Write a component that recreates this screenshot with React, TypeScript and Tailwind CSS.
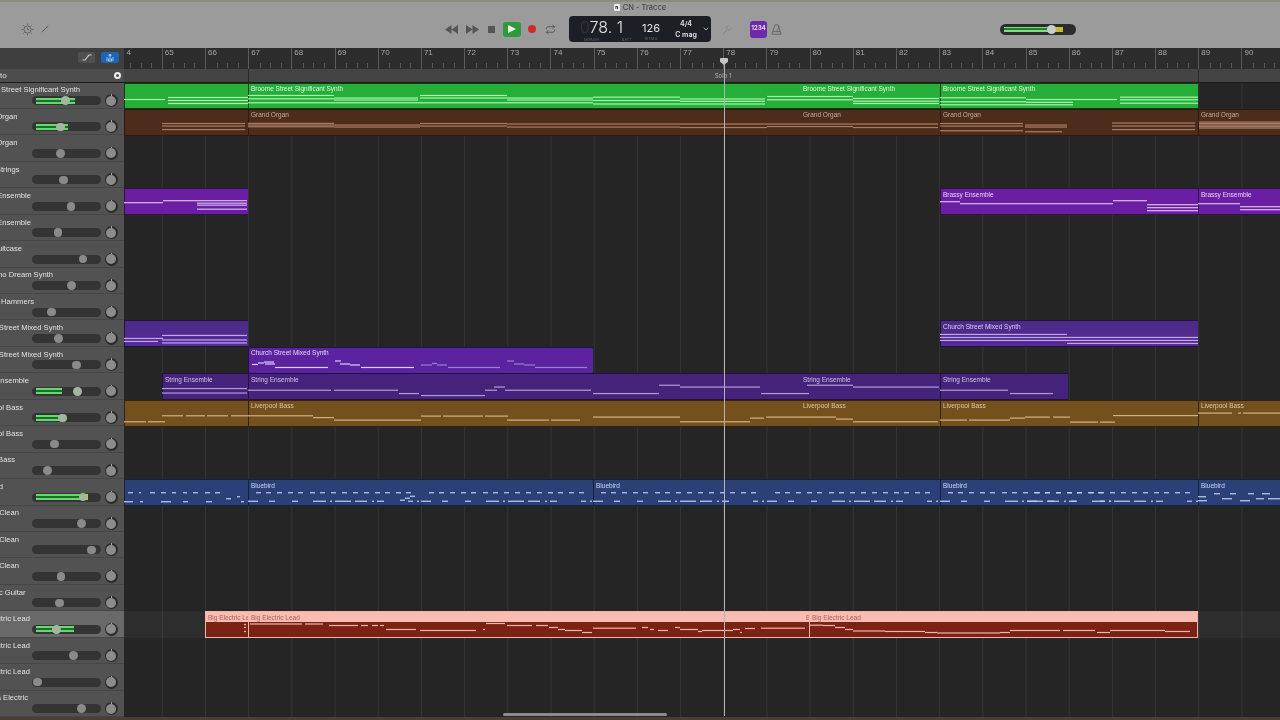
import React from 'react'
import { ChevronDown, Repeat } from 'lucide-react'

const ROW_H = 26.45
const TOP = 82.5
const rowTop = (i: number) => TOP + i * ROW_H

type Track = { name: string; end: number; knob: number; meter?: number; hot?: boolean; selected?: boolean }

const tracks: Track[] = [
  { name: 'Broome Street Significant Synth', end: 80, knob: 65, meter: 75 },
  { name: 'Grand Organ', end: 17.5, knob: 60, meter: 68 },
  { name: 'Grand Organ', end: 17.5, knob: 60 },
  { name: 'Studio Strings', end: 19.5, knob: 63 },
  { name: 'Brassy Ensemble', end: 31, knob: 70.5 },
  { name: 'Brassy Ensemble', end: 31, knob: 57.5 },
  { name: 'Vintage Suitcase', end: 22, knob: 82.5 },
  { name: 'Piano Dream Synth', end: 53, knob: 71 },
  { name: 'Keys Hammers', end: 34, knob: 51 },
  { name: 'Church Street Mixed Synth', end: 63, knob: 58 },
  { name: 'Church Street Mixed Synth', end: 63, knob: 76 },
  { name: 'String Ensemble', end: 29, knob: 77, meter: 62 },
  { name: 'Liverpool Bass', end: 23, knob: 62, meter: 62 },
  { name: 'Liverpool Bass', end: 23, knob: 54 },
  { name: 'Liverpool Bass', end: 15, knob: 47 },
  { name: 'Bluebird', end: 3, knob: 82.5, meter: 82, hot: true },
  { name: 'Electric Clean', end: 19, knob: 81 },
  { name: 'Electric Clean', end: 19, knob: 91 },
  { name: 'Electric Clean', end: 19, knob: 60.5 },
  { name: 'Acoustic Guitar', end: 25.5, knob: 59 },
  { name: 'Big Electric Lead', end: 30, knob: 56, meter: 74, selected: true },
  { name: 'Big Electric Lead', end: 30, knob: 73 },
  { name: 'Big Electric Lead', end: 30, knob: 37 },
  { name: 'Plasma Electric', end: 28, knob: 81 },
]

type Note = [number, number, number]
type Region = { from: number; to: number; label?: string; seamless?: boolean }
type Lane = {
  regions: Region[]
  box: string
  text: string
  note: string
  notes: Note[]
  dim?: Note[]
  dimColor?: string
  head?: boolean
}

const bluebirdTop = (o: number): Note[] =>
  [8, 18, 29, 40, 50, 62, 72, 83, 94, 105, 116, 127, 137, 148, 158].map((x) => [o + x, o + x + 5, 493] as Note)
const bluebirdLow = (o: number): Note[] =>
  ([[0, 10], [21, 27], [44, 50], [65, 78], [82, 84], [87, 103], [107, 119], [124, 126], [129, 136], [160, 165], [169, 171]] as number[][]).map(
    ([a, b]) => [o + a, o + b, 501.5] as Note,
  )

const lanes: Record<number, Lane> = {
  0: {
    box: 'bg-[#25ae38] border-[#123c18]',
    text: 'text-[#e2f8e2]',
    note: '#a8f5ae',
    regions: [
      { from: 124, to: 248 },
      { from: 248, to: 801, label: 'Broome Street Significant Synth' },
      { from: 801, to: 940, label: 'Broome Street Significant Synth', seamless: true },
      { from: 940, to: 1198, label: 'Broome Street Significant Synth' },
    ],
    notes: [
      [124, 165, 99], [168, 248, 97], [168, 248, 100], [168, 248, 103],
      [248, 334, 95], [248, 334, 98.3], [334, 418, 97.5], [334, 418, 99.5], [248, 593, 102.3],
      [420, 507, 95], [420, 507, 97.5], [507, 593, 97.5], [507, 593, 99.5],
      [593, 680, 96.7], [593, 680, 100], [593, 765, 103.5], [680, 765, 98.5], [680, 765, 100.8],
      [767, 853, 96], [767, 853, 99.3], [853, 939, 98], [853, 939, 100.7], [853, 939, 103],
      [940, 1026, 97.3], [940, 1026, 101.3], [940, 1073, 104.3], [1026, 1117, 99], [1026, 1073, 101.8],
      [1120, 1198, 96.7], [1120, 1198, 99.3], [1120, 1198, 102.7],
    ],
  },
  1: {
    box: 'bg-[#4d2c1b] border-[#2c1a10]',
    text: 'text-[#c7ab9b]',
    note: '#a87d66',
    regions: [
      { from: 124, to: 248 },
      { from: 248, to: 801, label: 'Grand Organ' },
      { from: 801, to: 940, label: 'Grand Organ', seamless: true },
      { from: 940, to: 1198, label: 'Grand Organ' },
      { from: 1198, to: 1280, label: 'Grand Organ' },
    ],
    notes: [
      [162, 245, 123.5], [162, 245, 126], [162, 245, 129.5],
      [248, 334, 123.3], [248, 334, 125], [248, 334, 126.7], [334, 420, 125], [334, 420, 127],
      [420, 507, 123.5], [420, 507, 126], [507, 593, 124], [507, 593, 127],
      [593, 680, 124], [593, 680, 127], [680, 767, 124], [680, 767, 127.5],
      [767, 853, 124], [767, 853, 126.5], [853, 938, 124], [853, 938, 127.5],
      [940, 1023, 123.5], [940, 1023, 126], [940, 1023, 130.7],
      [1025, 1067, 125], [1025, 1067, 127], [1025, 1062, 131.7],
      [1112, 1195, 123], [1112, 1195, 126], [1112, 1195, 129.5],
      [1199, 1280, 122], [1199, 1280, 123.5], [1199, 1280, 125], [1199, 1280, 126.5], [1199, 1280, 128],
    ],
  },
  4: {
    box: 'bg-[#6a1fa3] border-[#2e1347]',
    text: 'text-[#e6d2f5]',
    note: '#dcb8f2',
    regions: [
      { from: 124, to: 248 },
      { from: 940, to: 1198, label: 'Brassy Ensemble' },
      { from: 1198, to: 1280, label: 'Brassy Ensemble' },
    ],
    notes: [
      [124, 163, 203], [163, 247, 201], [197, 247, 203.5], [197, 247, 205.5], [197, 247, 209.5],
      [940, 960, 202], [960, 1113, 204], [1113, 1147, 201], [1147, 1198, 205], [1147, 1198, 208], [1147, 1198, 211],
      [1198, 1240, 204], [1240, 1280, 207], [1240, 1280, 210],
    ],
  },
  9: {
    box: 'bg-[linear-gradient(#4c2a86,#552a98)] border-[#241340]',
    text: 'text-[#dccdf2]',
    note: '#c2a8e8',
    regions: [
      { from: 124, to: 248 },
      { from: 940, to: 1198, label: 'Church Street Mixed Synth' },
    ],
    notes: [
      [124, 158, 342], [124, 163, 339], [162, 247, 336], [162, 247, 340.5], [162, 247, 343.5],
      [940, 1067, 335], [940, 1067, 338], [940, 1067, 341], [1067, 1198, 338], [1067, 1198, 341], [1067, 1198, 344],
    ],
  },
  10: {
    box: 'bg-[#5b23a0] border-[#26114a] rounded-[2px]',
    text: 'text-[#e2d3f7]',
    note: '#e0ccf5',
    dimColor: '#9a7fcc',
    regions: [{ from: 248, to: 593, label: 'Church Street Mixed Synth' }],
    notes: [
      [252, 258, 364.5], [258, 264, 363], [264, 274, 362], [265, 275, 364], [275, 328, 367.5],
      [335, 341, 361], [340, 350, 364], [350, 360, 365], [361, 414, 367.5],
    ],
    dim: [
      [421, 432, 365], [432, 437, 363.5], [437, 447, 365], [448, 500, 367.5],
      [507, 514, 361], [514, 524, 364], [524, 535, 365], [535, 587, 367.5],
    ],
  },
  11: {
    box: 'bg-[#46237a] border-[#22113e]',
    text: 'text-[#cfc0e6]',
    note: '#b39cd4',
    regions: [
      { from: 162, to: 248, label: 'String Ensemble' },
      { from: 248, to: 801, label: 'String Ensemble' },
      { from: 801, to: 940, label: 'String Ensemble', seamless: true },
      { from: 940, to: 1068, label: 'String Ensemble' },
    ],
    notes: [
      [162, 247, 389], [162, 247, 393.5], [248, 331, 390.7], [334, 398, 390.7], [399, 419, 394], [421, 485, 396],
      [485, 497, 390.7], [494, 505, 387.5], [505, 591, 390.7], [593, 659, 394], [659, 680, 385.7], [680, 760, 387.5],
      [761, 809, 394], [807, 853, 385.7], [853, 939, 387.5], [940, 1008, 390.7], [1010, 1053, 394],
    ],
  },
  12: {
    box: 'bg-[#74501d] border-[#33230d]',
    text: 'text-[#dcc8a6]',
    note: '#d2b283',
    regions: [
      { from: 124, to: 248 },
      { from: 248, to: 801, label: 'Liverpool Bass' },
      { from: 801, to: 940, label: 'Liverpool Bass', seamless: true },
      { from: 940, to: 1198, label: 'Liverpool Bass' },
      { from: 1198, to: 1280, label: 'Liverpool Bass' },
    ],
    notes: [
      [124, 146, 421.7], [148, 165, 421.7], [162, 183, 415.7], [186, 205, 415.7], [207, 228, 415.7], [231, 313, 415.7],
      [313, 334, 417.5], [334, 421, 420], [421, 441, 416], [443, 483, 416], [485, 508, 416], [507, 549, 420], [551, 580, 420],
      [593, 680, 417], [680, 750, 421.7], [750, 764, 418], [766, 836, 417], [836, 853, 419], [853, 938, 421.7],
      [940, 967, 420], [969, 983, 420], [983, 1010, 420], [1010, 1025, 418], [1025, 1050, 417], [1053, 1070, 417],
      [1070, 1098, 422], [1100, 1115, 422], [1113, 1198, 415.5], [1198, 1232, 413], [1238, 1241, 413], [1243, 1280, 413],
    ],
  },
  15: {
    box: 'bg-[#2c4078] border-[#16213f]',
    text: 'text-[#cdd7f0]',
    note: '#c3cff0',
    regions: [
      { from: 124, to: 248 },
      { from: 248, to: 593, label: 'Bluebird' },
      { from: 593, to: 940, label: 'Bluebird' },
      { from: 940, to: 1198, label: 'Bluebird' },
      { from: 1198, to: 1280, label: 'Bluebird' },
    ],
    notes: [
      [128, 133, 493], [139, 141, 493], [150, 155, 493], [161, 166, 493], [172, 176, 493], [183, 187, 493], [193, 198, 493],
      [205, 210, 493], [215, 220, 493], [124, 133, 502], [140, 143, 502], [161, 171, 502], [183, 188, 502], [206, 212, 502],
      [226, 231, 499], [237, 240, 497], [241, 244, 502],
      ...bluebirdTop(248), ...bluebirdLow(248),
      [400, 405, 500.5], [405, 410, 498.5], [410, 415, 496.5],
      ...bluebirdTop(421), ...bluebirdLow(421),
      ...bluebirdTop(593), ...bluebirdLow(593),
      ...bluebirdTop(767), ...bluebirdLow(767),
      ...bluebirdTop(940), ...bluebirdLow(940),
      ...bluebirdTop(1027), ...bluebirdLow(1027),
      [1198, 1206, 497], [1214, 1220, 494], [1230, 1236, 494], [1248, 1254, 494], [1262, 1270, 494],
      [1198, 1207, 501], [1222, 1232, 499], [1240, 1250, 501], [1256, 1264, 499], [1268, 1280, 499],
    ],
  },
  20: {
    box: 'bg-[#7a2315] border-[#f5b5a8]',
    text: 'text-[#a8625a]',
    note: '#f3b3a5',
    head: true,
    regions: [
      { from: 205, to: 248, label: 'Big Electric Lead' },
      { from: 248, to: 804, label: 'Big Electric Lead' },
      { from: 804, to: 809, label: 'Big Electric Lead', seamless: true },
      { from: 809, to: 1198, label: 'Big Electric Lead' },
    ],
    notes: [
      [244, 246, 625], [244, 246, 628], [244, 246, 632],
      [250, 302, 624.5], [305, 323, 624.5], [329, 358, 626], [361, 368, 626], [372, 378, 626], [380, 384, 626],
      [386, 416, 630], [420, 476, 631], [483, 485, 630], [486, 505, 624], [507, 532, 626], [536, 548, 626],
      [549, 558, 628], [558, 565, 630], [565, 582, 631], [582, 592, 633], [593, 636, 628.7], [642, 648, 628],
      [650, 654, 630], [658, 668, 631], [675, 680, 628], [680, 698, 630], [698, 702, 632], [702, 733, 631],
      [733, 740, 630], [740, 742, 633], [745, 755, 629], [761, 805, 628.7], [810, 823, 625.7], [823, 835, 626],
      [835, 845, 628], [845, 853, 630], [853, 885, 631.5], [885, 925, 632], [925, 937, 633], [937, 1000, 633.5],
      [1000, 1010, 633], [1010, 1060, 631], [1063, 1095, 631], [1097, 1110, 633], [1110, 1165, 631], [1165, 1190, 632],
    ],
  },
}

const bars = Array.from({ length: 28 }, (_, i) => 64 + i)

function TrackHeader({ track }: { track: Track }) {
  return (
    <div className={`h-[26.45px] shrink-0 border-b border-[#464646] ${track.selected ? 'bg-[#696969]' : 'bg-[#525252]'}`}>
      <div
        className="flex h-[13px] items-center justify-end overflow-hidden whitespace-nowrap pt-[2px] font-['Liberation_Sans',sans-serif] text-[7.6px] text-[#e2e2e2]"
        style={{ width: track.end }}
      >
        {track.name}
      </div>
      <div className="-mt-[1.5px] flex items-center">
        <div className="relative ml-[32px] h-[9px] w-[69px] rounded-full bg-[#343434]">
          {track.meter && (
            <div className="absolute left-[4px] top-[1.5px] flex h-[6px] flex-col justify-between overflow-hidden bg-[#1d6e2a]" style={{ width: track.meter - 36 }}>
              <div className="h-[2px] bg-[#66d870]" />
              <div className="h-[2px] bg-[#66d870]" />
            </div>
          )}
          {track.hot && <div className="absolute left-[50px] top-[1.5px] h-[6px] w-[6px] bg-[#c9c04a]" />}
          <div
            className={`absolute top-[0.25px] h-[8.5px] w-[8.5px] rounded-full ${track.meter ? 'bg-[#9fb89f]' : 'bg-[#8a8a8a]'}`}
            style={{ left: track.knob - 36 }}
          />
        </div>
        <div className="relative ml-[3.5px] flex h-[13px] w-[13px] items-center justify-center rounded-full bg-[#2b2b2b]">
          <div className="h-[10px] w-[10px] rounded-full bg-[#8c8c8c]" />
          <div className="absolute left-[6px] top-0 h-[1.5px] w-px bg-[#a8a8a8]" />
        </div>
      </div>
    </div>
  )
}

function Lane({ index, selected }: { index: number; selected?: boolean }) {
  const lane = lanes[index]
  const top = rowTop(index)
  return (
    <div className={`relative h-[26.45px] shrink-0 ${selected ? 'bg-[#ffffff0a]' : ''}`}>
      {lane &&
        lane.regions.map((r) => (
          <div
            key={r.from}
            className={`absolute bottom-[-0.5px] top-0 overflow-hidden border-y ${lane.box} ${r.seamless ? '' : 'border-l'} ${lane.head && r.to === 1198 ? 'border-r' : ''}`}
            style={{ left: r.from - 124, width: r.to - r.from }}
          >
            {lane.head && <div className="absolute inset-x-0 top-0 h-[10px] bg-[#f8bdb0]" />}
            {r.label && (
              <div className={`relative whitespace-nowrap pl-[2px] pt-[0.5px] font-['Liberation_Sans',sans-serif] text-[6.5px] leading-[9px] ${lane.text}`}>{r.label}</div>
            )}
          </div>
        ))}
      {lane && (
        <svg className="absolute inset-0 h-full w-full" viewBox={`124 ${top} 1156 ${ROW_H}`} preserveAspectRatio="none">
          {lane.notes.map(([a, b, y], i) => (
            <rect key={i} x={a} y={y - 0.6} width={b - a} height={1.2} fill={lane.note} />
          ))}
          {lane.dim?.map(([a, b, y], i) => (
            <rect key={i} x={a} y={y - 0.6} width={b - a} height={1.2} fill={lane.dimColor} />
          ))}
        </svg>
      )}
    </div>
  )
}

function Transport() {
  return (
    <>
      <svg className="ml-[396px] h-[9px] w-[13px]" viewBox="0 0 13 9" fill="#555">
        <path d="M6.5 0v9L0 4.5zM13 0v9L6.5 4.5z" />
      </svg>
      <svg className="ml-[8px] h-[9px] w-[13px]" viewBox="0 0 13 9" fill="#555">
        <path d="M0 0v9l6.5-4.5zM6.5 0v9L13 4.5z" />
      </svg>
      <div className="ml-[9px] h-[7px] w-[7px] bg-[#555]" />
      <div className="ml-[8px] flex h-[15px] w-[18px] items-center justify-center rounded-[3px] bg-[#2f9a3c]">
        <svg className="h-[8px] w-[8px]" viewBox="0 0 8 8" fill="#e8f5e8">
          <path d="M0 0l8 4-8 4z" />
        </svg>
      </div>
      <div className="ml-[7px] h-[8px] w-[8px] rounded-full bg-[#cf2a2a]" />
      <Repeat className="ml-[9px] h-[11px] w-[11px] text-[#555]" strokeWidth={2} />
    </>
  )
}

function Lcd() {
  return (
    <div className="ml-[13px] flex h-[26px] w-[142px] items-center rounded-[4px] bg-[#1c2026] text-[#e4e4e4]">
      <div className="flex w-[66px] flex-col pl-[11px] pt-[1px]">
        <div className="whitespace-nowrap text-[16px] font-light leading-[19px]">
          <span className="text-[#33373d]">0</span>78. 1
        </div>
        <div className="flex justify-between pl-[4px] pr-[3px] text-[4px] leading-[5px] text-[#5e6268]">
          <span>MISURA</span>
          <span>BATT</span>
        </div>
      </div>
      <div className="ml-[7px] flex w-[18px] flex-col items-center">
        <div className="mt-[3px] text-[11px] leading-[15px]">126</div>
        <div className="text-[4px] leading-[5px] text-[#5e6268]">RITMO</div>
      </div>
      <div className="ml-[12px] flex w-[28px] flex-col items-center text-[7px] font-semibold leading-[11px]">
        <span>4/4</span>
        <span className="whitespace-nowrap">C mag</span>
      </div>
      <ChevronDown className="ml-[2px] h-[8px] w-[8px] text-[#c8c8c8]" strokeWidth={2.5} />
    </div>
  )
}

export default function App() {
  return (
    <div className="relative flex h-[720px] w-[1280px] flex-col overflow-hidden bg-[#252525] font-['Inter','Liberation_Sans',sans-serif] blur-[0.3px]">
      {/* title bar and transport */}
      <div className="flex h-[48px] shrink-0 flex-col bg-[#9b9b9b]">
        <div className="h-[2px] bg-[#8d8a80]" />
        <div className="flex h-[11px] items-center justify-center text-[7.5px] font-medium text-[#484848]">
          <div className="mr-[3px] flex h-[7px] w-[6px] items-center justify-center rounded-[1px] bg-[#eee] text-[5px] font-bold text-black">n</div>
          CN - Tracce
        </div>
        <div className="flex flex-1 items-center pb-[3px]">
          <svg className="ml-[21px] h-[13px] w-[13px]" viewBox="0 0 13 13" fill="none" stroke="#666" strokeWidth="1">
            <circle cx="6.5" cy="6.5" r="3.6" />
            <path d="M6.5 0.5v1.6M6.5 10.9v1.6M0.5 6.5h1.6M10.9 6.5h1.6M2.3 2.3l1.1 1.1M9.6 9.6l1.1 1.1M2.3 10.7l1.1-1.1M9.6 3.4l1.1-1.1M6.5 4.6v2h1.6" />
          </svg>
          <svg className="ml-[7px] h-[8px] w-[8px]" viewBox="0 0 8 8" fill="none" stroke="#555" strokeWidth="1">
            <path d="M0.8 7.2L7.2 0.8" />
          </svg>
          <Transport />
          <Lcd />
          <svg className="ml-[11px] h-[11px] w-[10px]" viewBox="0 0 10 11" fill="none" stroke="#858585" strokeWidth="1">
            <path d="M0.5 10.5L5 6M4 3.5L7 6.5L9.5 4M4 3.5L6.5 1" />
          </svg>
          <div className="ml-[18px] flex h-[17px] w-[17px] items-center justify-center rounded-[3px] bg-[#6c2aa6] text-[6.5px] font-semibold tracking-[-0.2px] text-[#e9dcf5]">
            1234
          </div>
          <svg className="ml-[3.5px] h-[11px] w-[11px]" viewBox="0 0 11 11" fill="none" stroke="#5c5c5c" strokeWidth="0.8">
            <path d="M4 0.8h3L10.2 10.2H0.8zM5.5 7.6L8.6 2.4M2 7.6h7" />
          </svg>
          <div className="relative ml-[218px] h-[11px] w-[76px] rounded-full bg-[#2c2c2c]">
            <div className="absolute left-[4px] top-[3px] flex h-[5px] w-[44px] flex-col justify-between bg-[#2a7a34]">
              <div className="h-[1.5px] bg-[#7ee081]" />
              <div className="h-[1.5px] bg-[#7ee081]" />
            </div>
            <div className="absolute left-[48px] top-[3px] h-[5px] w-[15px] bg-[#c8b93e]" />
            <div className="absolute left-[47px] top-[1px] h-[9px] w-[9px] rounded-full bg-[#c8cfc8]" />
          </div>
        </div>
      </div>

      {/* ruler */}
      <div className="flex h-[21px] shrink-0 bg-[#2c2c2c]">
        <div className="flex w-[124px] shrink-0 items-center justify-end gap-[6px] bg-[#3f3f3f] pb-[2px] pr-[5px]">
          <div className="flex h-[11px] w-[17px] items-center justify-center rounded-[2px] bg-[#505050]">
            <svg className="h-[7px] w-[10px]" viewBox="0 0 10 7" fill="none" stroke="#cfcfcf" strokeWidth="1.2">
              <path d="M0.5 6h2.5l4-5h2.5" />
            </svg>
          </div>
          <div className="flex h-[11px] w-[18px] items-center justify-center rounded-[2px] bg-[#1f63b4]">
            <svg className="h-[8px] w-[8px]" viewBox="0 0 8 8" fill="none" stroke="#a9d0f5" strokeWidth="0.9">
              <circle cx="4" cy="1.2" r="1" fill="#a9d0f5" />
              <path d="M4 2.5V8M1 3.2v4M7 3.2v4M2.5 4.5v3M5.5 4.5v3" />
            </svg>
          </div>
        </div>
        <div className="flex-1 overflow-hidden">
          <div className="ml-[-5.4px] flex">
            {bars.map((b) => (
              <div key={b} className="h-[21px] w-[43.2px] shrink-0 border-l border-[#5a5a5a]">
                <div className="h-[15px] pl-[2px] font-['Liberation_Sans',sans-serif] text-[8px] leading-[9px] text-[#a8a8a8]">
                  {b === 64 ? <span className="ml-[5px]">4</span> : b}
                </div>
                <div className="flex h-[5px]">
                  <div className="w-1/4" />
                  <div className="w-1/4 border-l border-[#585858]" />
                  <div className="w-1/4 border-l border-[#585858]" />
                  <div className="w-1/4 border-l border-[#585858]" />
                </div>
              </div>
            ))}
          </div>
        </div>
      </div>

      {/* marker strip */}
      <div className="flex h-[13.5px] shrink-0 border-b border-[#1c1c1c]">
        <div className="flex w-[124px] shrink-0 items-center justify-between bg-[#4d4d4d] pr-[3px]">
          <span className="pt-[1px] font-['Liberation_Sans',sans-serif] text-[8px] text-[#dedede]">to</span>
          <div className="flex h-[7px] w-[7px] items-center justify-center rounded-full bg-[#eee]">
            <div className="h-[2.5px] w-[2.5px] rounded-full bg-[#555]" />
          </div>
        </div>
        <div className="w-[124.6px] shrink-0 border-r border-[#2a2a2a] bg-[#444]" />
        <div className="w-[950px] shrink-0 border-r border-[#2a2a2a] bg-[#444] text-center text-[6px] leading-[13px] text-[#b4b4b4]">Solo 1</div>
        <div className="flex-1 bg-[#444]" />
      </div>

      {/* tracks */}
      <div className="flex flex-1 overflow-hidden">
        <div className="flex w-[124px] shrink-0 flex-col">
          {tracks.map((t, i) => (
            <TrackHeader key={i} track={t} />
          ))}
        </div>
        <div className="flex flex-1 flex-col bg-[linear-gradient(90deg,#343434_1px,transparent_1px)] bg-[length:43.2px_100%] bg-[position:37.8px_0]">
          {tracks.map((t, i) => (
            <Lane key={i} index={i} selected={t.selected} />
          ))}
        </div>
      </div>

      {/* wallpaper edge below the window */}
      <div className="h-[3px] shrink-0 bg-[#4a4030]" />

      {/* playhead */}
      <div className="absolute bottom-[4px] left-[723.5px] top-[62px] w-[1.2px] bg-[#b4b4b4]" />
      <div className="absolute left-[720px] top-[58px] h-[7px] w-[8px] rounded-t-[1px] bg-[#c4c4c4] [clip-path:polygon(0_0,100%_0,100%_55%,50%_100%,0_55%)]" />
      {/* scroll bar */}
      <div className="absolute bottom-[4px] left-[503px] h-[3px] w-[164px] rounded-full bg-[#8c8c8c]" />
    </div>
  )
}
